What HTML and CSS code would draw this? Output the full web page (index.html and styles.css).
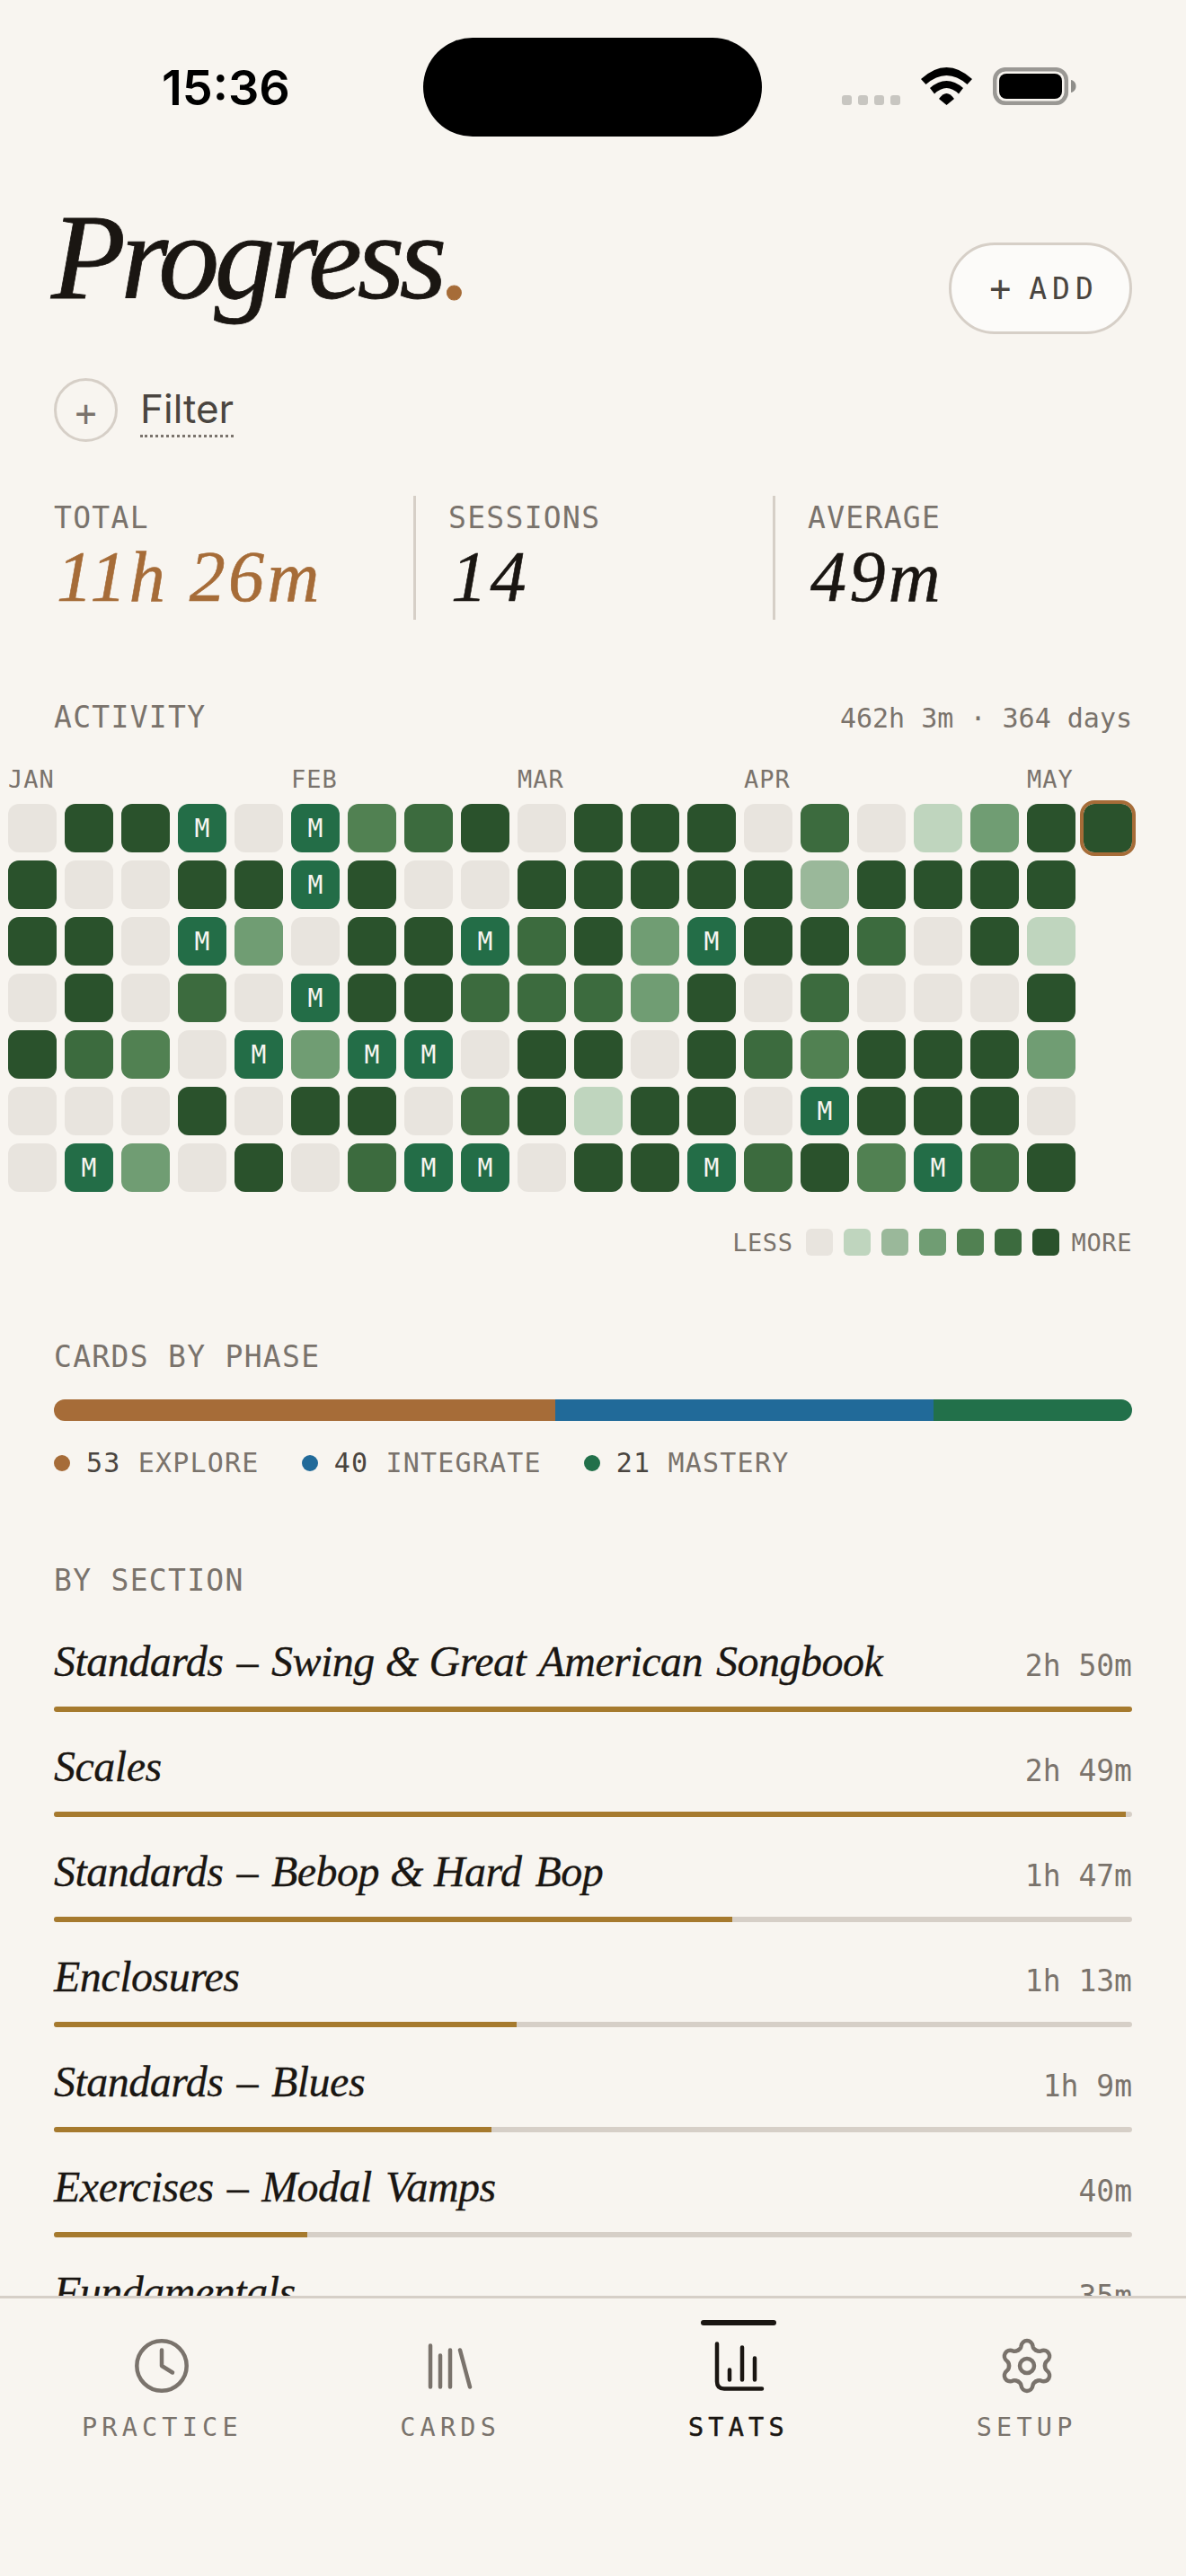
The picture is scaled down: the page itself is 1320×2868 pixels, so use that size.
FILE: index.html
```html
<!DOCTYPE html>
<html lang="en">
<head>
    <meta charset="UTF-8">
    <meta name="viewport" content="width=device-width, initial-scale=1.0">
    <title>Progress</title>
    <link rel="stylesheet" href="styles.css">
</head>
<body>
    <svg class="sprites" width="0" height="0" aria-hidden="true">
        <defs>
            <path id="gear-lobe" d="M26 18.7C27.7 17.7 29 17 29.4 14.5C30 10 33 8 36 8C39 8 42 10 42.6 14.5C43 17 44.3 17.7 46 18.7"/>
        </defs>
    </svg>

    <div class="status-bar">
        <div class="status-time">15:36</div>
        <div class="island"></div>
        <div class="status-icons">
            <div class="signal"><i></i><i></i><i></i><i></i></div>
            <svg class="wifi" viewBox="0 0 57 42">
                <path d="M0 13Q28.5 -13 57 13L51.5 19Q28.5 -1 5.500 19Z"/>
                <path d="M10 23Q28.5 7 47 23L42 29.500Q28.500 16.500 15 29.500Z"/>
                <path d="M20 35Q28.5 23 37 35L28.500 42Z"/>
            </svg>
            <svg class="battery" viewBox="0 0 93 42">
                <rect x="2.2" y="2.200" width="79.600" height="37.600" rx="12" fill="none" stroke="#9a9894" stroke-width="4.500"/>
                <rect x="7" y="7" width="70" height="28" rx="8" fill="#000"/>
                <path d="M87 14C90 14.500 92.500 17 92.500 21C92.500 25 90 27.500 87 28Z" fill="#8f8e8a"/>
            </svg>
        </div>
    </div>

    <main class="content">
        <header class="page-head">
            <h1 class="page-title">Progress<span class="accent">.</span></h1>
            <button class="add-btn"><span class="add-plus">+</span> <span>ADD</span></button>
        </header>

        <div class="filter">
            <span class="filter-circle">+</span>
            <span class="filter-label">Filter</span>
        </div>

        <section class="stats">
            <div class="stat">
                <div class="label">TOTAL</div>
                <div class="stat-value accent">11h 26m</div>
            </div>
            <div class="stat">
                <div class="label">SESSIONS</div>
                <div class="stat-value">14</div>
            </div>
            <div class="stat">
                <div class="label">AVERAGE</div>
                <div class="stat-value">49m</div>
            </div>
        </section>

        <section class="activity">
            <div class="activity-head">
                <div class="label">ACTIVITY</div>
                <div class="activity-total">462h 3m · 364 days</div>
            </div>

            <div class="months">
                <span style="grid-column:1">JAN</span>
                <span style="grid-column:6">FEB</span>
                <span style="grid-column:10">MAR</span>
                <span style="grid-column:14">APR</span>
                <span style="grid-column:19">MAY</span>
            </div>

            <div class="heatmap">
                <i class="l0"></i><i class="l6"></i><i class="l6"></i><i class="lm">M</i><i class="l0"></i><i class="lm">M</i><i class="l4"></i><i class="l5"></i><i class="l6"></i><i class="l0"></i><i class="l6"></i><i class="l6"></i><i class="l6"></i><i class="l0"></i><i class="l5"></i><i class="l0"></i><i class="l1"></i><i class="l3"></i><i class="l6"></i><i class="l6 today"></i>
                <i class="l6"></i><i class="l0"></i><i class="l0"></i><i class="l6"></i><i class="l6"></i><i class="lm">M</i><i class="l6"></i><i class="l0"></i><i class="l0"></i><i class="l6"></i><i class="l6"></i><i class="l6"></i><i class="l6"></i><i class="l6"></i><i class="l2"></i><i class="l6"></i><i class="l6"></i><i class="l6"></i><i class="l6"></i><i></i>
                <i class="l6"></i><i class="l6"></i><i class="l0"></i><i class="lm">M</i><i class="l3"></i><i class="l0"></i><i class="l6"></i><i class="l6"></i><i class="lm">M</i><i class="l5"></i><i class="l6"></i><i class="l3"></i><i class="lm">M</i><i class="l6"></i><i class="l6"></i><i class="l5"></i><i class="l0"></i><i class="l6"></i><i class="l1"></i><i></i>
                <i class="l0"></i><i class="l6"></i><i class="l0"></i><i class="l5"></i><i class="l0"></i><i class="lm">M</i><i class="l6"></i><i class="l6"></i><i class="l5"></i><i class="l5"></i><i class="l5"></i><i class="l3"></i><i class="l6"></i><i class="l0"></i><i class="l5"></i><i class="l0"></i><i class="l0"></i><i class="l0"></i><i class="l6"></i><i></i>
                <i class="l6"></i><i class="l5"></i><i class="l4"></i><i class="l0"></i><i class="lm">M</i><i class="l3"></i><i class="lm">M</i><i class="lm">M</i><i class="l0"></i><i class="l6"></i><i class="l6"></i><i class="l0"></i><i class="l6"></i><i class="l5"></i><i class="l4"></i><i class="l6"></i><i class="l6"></i><i class="l6"></i><i class="l3"></i><i></i>
                <i class="l0"></i><i class="l0"></i><i class="l0"></i><i class="l6"></i><i class="l0"></i><i class="l6"></i><i class="l6"></i><i class="l0"></i><i class="l5"></i><i class="l6"></i><i class="l1"></i><i class="l6"></i><i class="l6"></i><i class="l0"></i><i class="lm">M</i><i class="l6"></i><i class="l6"></i><i class="l6"></i><i class="l0"></i><i></i>
                <i class="l0"></i><i class="lm">M</i><i class="l3"></i><i class="l0"></i><i class="l6"></i><i class="l0"></i><i class="l5"></i><i class="lm">M</i><i class="lm">M</i><i class="l0"></i><i class="l6"></i><i class="l6"></i><i class="lm">M</i><i class="l5"></i><i class="l6"></i><i class="l4"></i><i class="lm">M</i><i class="l5"></i><i class="l6"></i><i></i>
            </div>

            <div class="scale">
                <span>LESS</span>
                <i class="l0"></i><i class="l1"></i><i class="l2"></i><i class="l3"></i><i class="l4"></i><i class="l5"></i><i class="l6"></i>
                <span>MORE</span>
            </div>
        </section>

        <section class="phases">
            <div class="label">CARDS BY PHASE</div>
            <div class="phase-bar">
                <div class="explore" style="width:46.49%"></div>
                <div class="integrate" style="width:35.09%"></div>
                <div class="mastery" style="width:18.42%"></div>
            </div>
            <div class="phase-legend">
                <div class="phase-item"><i class="explore"></i><span><b>53</b> EXPLORE</span></div>
                <div class="phase-item"><i class="integrate"></i><span><b>40</b> INTEGRATE</span></div>
                <div class="phase-item"><i class="mastery"></i><span><b>21</b> MASTERY</span></div>
            </div>
        </section>

        <section class="sections">
            <div class="label">BY SECTION</div>
            <div class="section-list">
                <div class="section-row">
                    <div class="section-line"><span class="section-name">Standards – Swing <span class="amp">&amp;</span> Great American Songbook</span><span class="section-time">2h 50m</span></div>
                    <div class="track"><div class="fill" style="width:100%"></div></div>
                </div>
                <div class="section-row">
                    <div class="section-line"><span class="section-name">Scales</span><span class="section-time">2h 49m</span></div>
                    <div class="track"><div class="fill" style="width:99.4%"></div></div>
                </div>
                <div class="section-row">
                    <div class="section-line"><span class="section-name">Standards – Bebop <span class="amp">&amp;</span> Hard Bop</span><span class="section-time">1h 47m</span></div>
                    <div class="track"><div class="fill" style="width:62.9%"></div></div>
                </div>
                <div class="section-row">
                    <div class="section-line"><span class="section-name">Enclosures</span><span class="section-time">1h 13m</span></div>
                    <div class="track"><div class="fill" style="width:42.9%"></div></div>
                </div>
                <div class="section-row">
                    <div class="section-line"><span class="section-name">Standards – Blues</span><span class="section-time">1h 9m</span></div>
                    <div class="track"><div class="fill" style="width:40.6%"></div></div>
                </div>
                <div class="section-row">
                    <div class="section-line"><span class="section-name">Exercises – Modal Vamps</span><span class="section-time">40m</span></div>
                    <div class="track"><div class="fill" style="width:23.5%"></div></div>
                </div>
                <div class="section-row">
                    <div class="section-line"><span class="section-name">Fundamentals</span><span class="section-time">35m</span></div>
                    <div class="track"><div class="fill" style="width:20.6%"></div></div>
                </div>
            </div>
        </section>
    </main>

    <nav class="tab-bar">
        <div class="tab">
            <div class="tab-mark"></div>
            <svg class="tab-icon" viewBox="0 0 72 72">
                <circle cx="36" cy="36" r="27.700"/>
                <path d="M36 18.500V36L48 43.500"/>
            </svg>
            <div class="tab-label">PRACTICE</div>
        </div>
        <div class="tab">
            <div class="tab-mark"></div>
            <svg class="tab-icon" viewBox="0 0 72 72">
                <path d="M14 13.500V59.500M25 24.500V59.500M36 18.500V59.500M47 18.500L58 59.500"/>
            </svg>
            <div class="tab-label">CARDS</div>
        </div>
        <div class="tab active">
            <div class="tab-mark"></div>
            <svg class="tab-icon" viewBox="0 0 72 72">
                <path d="M12 11.500V53.500Q12 61.500 20 61.500H62"/>
                <path d="M26 40.500V51.500M40 15.500V51.500M54 27.500V51.500"/>
            </svg>
            <div class="tab-label">STATS</div>
        </div>
        <div class="tab">
            <div class="tab-mark"></div>
            <svg class="tab-icon" viewBox="0 0 72 72">
                <use href="#gear-lobe"/>
                <use href="#gear-lobe" transform="rotate(60 36 36)"/>
                <use href="#gear-lobe" transform="rotate(120 36 36)"/>
                <use href="#gear-lobe" transform="rotate(180 36 36)"/>
                <use href="#gear-lobe" transform="rotate(240 36 36)"/>
                <use href="#gear-lobe" transform="rotate(300 36 36)"/>
                <circle cx="36" cy="36" r="8"/>
            </svg>
            <div class="tab-label">SETUP</div>
        </div>
    </nav>
</body>
</html>
```

FILE: styles.css
```css
:root {
    --paper: #f8f5f0;
    --ink: #1a1612;
    --muted: #7a736c;
    --soft-ink: #4a4540;
    --rule: #d6cfc7;
    --copper: #a66c38;
    --blue: #216a99;
    --green: #22704a;
    --gold: #a67a2e;
    --mono: "DejaVu Sans Mono", "Liberation Mono", monospace;
    --serif: "Liberation Serif", serif;
}

* {
    box-sizing: border-box;
}

html, body {
    margin: 0;
    height: 100%;
}

body {
    display: flex;
    flex-direction: column;
    width: 1320px;
    height: 2868px;
    overflow: hidden;
    background: var(--paper);
    color: var(--ink);
    font-family: var(--mono);
}

.sprites {
    position: absolute;
}

/* Status bar */
.status-bar {
    display: grid;
    grid-template-columns: 471px 377px 1fr;
    flex: none;
    height: 190px;
    padding-top: 42px;
}

.status-time {
    margin-top: 26px;
    padding-left: 180px;
    font-family: Inter, sans-serif;
    font-size: 54px;
    font-weight: 600;
    line-height: 60px;
    color: #000;
}

.island {
    height: 110px;
    border-radius: 55px;
    background: #000;
}

.status-icons {
    display: flex;
    align-items: flex-end;
    gap: 23px;
    height: 42px;
    margin-top: 33px;
    padding-left: 89px;
}

.signal {
    display: flex;
    gap: 7px;
}

.signal i {
    width: 11px;
    height: 11px;
    border-radius: 3px;
    background: #c8c6c1;
}

.wifi {
    width: 57px;
    height: 42px;
}

.battery {
    width: 93px;
    height: 42px;
}

/* Main column */
.content {
    flex: 1;
    min-height: 0;
    overflow: hidden;
    padding: 28px 60px 0;
}

.accent {
    color: var(--copper);
}

.page-head {
    display: flex;
    justify-content: space-between;
    align-items: flex-start;
}

.page-title {
    margin: 0 0 0 -3px;
    font-family: var(--serif);
    font-size: 136px;
    font-style: italic;
    font-weight: 400;
    line-height: 136px;
    letter-spacing: -5.800px;
    -webkit-text-stroke: 0.800px currentColor;
}

.add-btn {
    display: flex;
    align-items: center;
    justify-content: center;
    gap: 20px;
    width: 204px;
    height: 102px;
    margin-top: 52px;
    padding: 0 0 0 8px;
    border: 3px solid var(--rule);
    border-radius: 51px;
    background: #fcfbf9;
    color: var(--soft-ink);
    font-family: var(--mono);
    font-size: 33px;
    letter-spacing: 6px;
}

.add-plus {
    font-size: 40px;
    font-weight: 400;
    line-height: 1;
    letter-spacing: 0;
}

.filter {
    display: flex;
    align-items: center;
    gap: 25px;
    margin-top: 49px;
}

.filter-circle {
    display: flex;
    align-items: center;
    justify-content: center;
    width: 71px;
    height: 71px;
    padding-top: 7px;
    border: 3px solid var(--rule);
    border-radius: 50%;
    color: var(--muted);
    font-size: 40px;
}

.filter-label {
    margin-top: 2px;
    padding-bottom: 3px;
    border-bottom: 3px dotted var(--muted);
    font-family: Inter, sans-serif;
    font-size: 44px;
    line-height: 52px;
    color: var(--soft-ink);
}

.label {
    font-size: 33px;
    line-height: 40px;
    letter-spacing: 1.300px;
    color: var(--muted);
}

/* Totals */
.stats {
    display: grid;
    grid-template-columns: repeat(3, 400px);
    height: 138px;
    margin-top: 60px;
}

.stat {
    padding-top: 5px;
}

.stat + .stat {
    padding-left: 36px;
    border-left: 3px solid var(--rule);
}

.stat-value {
    margin-top: 1px;
    padding-left: 3px;
    font-family: var(--serif);
    font-size: 80px;
    font-style: italic;
    line-height: 88px;
    letter-spacing: 3.400px;
    -webkit-text-stroke: 0.600px currentColor;
}

/* Heatmap */
.activity {
    margin-top: 89px;
}

.activity-head {
    display: flex;
    justify-content: space-between;
    align-items: baseline;
}

.activity-total {
    font-size: 30px;
    line-height: 40px;
    color: var(--muted);
}

.months,
.heatmap {
    display: grid;
    grid-template-columns: repeat(20, 54px);
    column-gap: 9px;
    margin-left: -51px;
}

.months {
    margin-top: 31px;
    font-size: 27px;
    line-height: 34px;
    letter-spacing: 1px;
    color: var(--muted);
}

.months span {
    white-space: nowrap;
}

.heatmap {
    grid-auto-rows: 54px;
    row-gap: 9px;
    margin-top: 10px;
}

.heatmap i {
    display: flex;
    align-items: center;
    justify-content: center;
    border-radius: 12px;
    font-size: 28px;
    font-style: normal;
    color: #f8f5f0;
}

.l0 { background: #e8e4de; }
.l1 { background: #bfd5be; }
.l2 { background: #9ab89a; }
.l3 { background: #709d73; }
.l4 { background: #518152; }
.l5 { background: #3c6b3e; }
.l6 { background: #2a522c; }
.lm { background: #236d47; }

.heatmap .today {
    outline: 4.500px solid var(--copper);
}

.scale {
    display: flex;
    justify-content: flex-end;
    align-items: center;
    gap: 12px;
    height: 30px;
    margin-top: 41px;
    font-size: 27px;
    letter-spacing: 0.600px;
    color: var(--muted);
}

.scale i {
    width: 30px;
    height: 30px;
    border-radius: 6px;
}

.scale span:first-child {
    margin-right: 2px;
}

.scale span:last-child {
    margin-left: 2px;
}

/* Phase split */
.phases {
    margin-top: 93px;
}

.phase-bar {
    display: flex;
    height: 24px;
    margin-top: 27px;
    overflow: hidden;
    border-radius: 12px;
}

.explore { background: var(--copper); }
.integrate { background: var(--blue); }
.mastery { background: var(--green); }

.phase-legend {
    display: flex;
    gap: 47px;
    margin-top: 29px;
    font-size: 30px;
    line-height: 36px;
    letter-spacing: 1.200px;
    color: var(--muted);
}

.phase-item {
    display: flex;
    align-items: center;
    gap: 18px;
}

.phase-item i {
    width: 18px;
    height: 18px;
    border-radius: 50%;
}

.phase-item b {
    font-weight: 400;
    color: var(--soft-ink);
}

/* Section list */
.sections {
    margin-top: 93px;
}

.section-list {
    margin-top: 40px;
}

.section-row {
    height: 117px;
}

.section-line {
    display: flex;
    justify-content: space-between;
    align-items: baseline;
    height: 60px;
    margin-bottom: 20px;
}

.section-name {
    font-family: var(--serif);
    font-size: 48px;
    font-style: italic;
    line-height: 60px;
    letter-spacing: -0.500px;
    word-spacing: 3.500px;
    -webkit-text-stroke: 0.300px currentColor;
}

.amp {
    margin: 0 -3px;
}

.section-time {
    font-size: 33px;
    line-height: 60px;
    color: var(--muted);
}

.track {
    height: 6px;
    overflow: hidden;
    border-radius: 3px;
    background: var(--rule);
}

.fill {
    height: 100%;
    background: var(--gold);
}

/* Tab bar */
.tab-bar {
    display: grid;
    grid-template-columns: repeat(4, 1fr);
    flex: none;
    height: 312px;
    padding: 24px 17px 0 20px;
    border-top: 3px solid var(--rule);
    background: var(--paper);
}

.tab {
    display: flex;
    flex-direction: column;
    align-items: center;
    color: var(--muted);
}

.tab-mark {
    width: 84px;
    height: 6px;
    border-radius: 3px;
}

.tab-icon {
    width: 72px;
    height: 72px;
    margin-top: 8.500px;
    fill: none;
    stroke: currentColor;
    stroke-width: 4.500px;
    stroke-linecap: round;
    stroke-linejoin: round;
}

.tab-label {
    margin-top: 15px;
    font-size: 28.500px;
    line-height: 36px;
    letter-spacing: 5.200px;
}

.tab.active {
    color: var(--ink);
}

.tab.active .tab-mark {
    background: var(--ink);
}

.tab.active .tab-label {
    -webkit-text-stroke: 0.500px currentColor;
}
```
